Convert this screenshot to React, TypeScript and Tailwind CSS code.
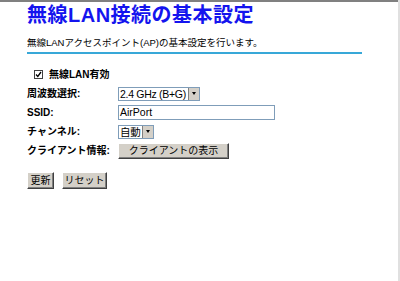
const font = { fontFamily: '"Liberation Sans", "Noto Sans CJK JP", sans-serif' }

function SelectBox({ value }: { value: string }) {
  return (
    <div className="flex h-[14px] items-stretch border border-[#7f9db9] bg-white">
      <span className="whitespace-nowrap pl-[1px] pr-[2px] text-[10.5px] leading-[12px] tracking-[-0.3px] text-black">
        {value}
      </span>
      <span className="flex w-[11px] shrink-0 items-center justify-center border-l border-[#808080] bg-[#d4d0c8]">
        <span className="block h-0 w-0 border-x-[2px] border-t-[3px] border-x-transparent border-t-black" />
      </span>
    </div>
  )
}

function Row({ label, children }: { label: string; children: React.ReactNode }) {
  return (
    <div className="flex h-[19px] items-center">
      <span className="w-[91px] text-[10px] font-bold text-black">{label}</span>
      {children}
    </div>
  )
}

function Win98Button({ label, className }: { label: string; className: string }) {
  return (
    <div
      className={`flex items-center justify-center whitespace-nowrap border border-t-white border-l-white border-r-[#404040] border-b-[#404040] bg-[#d4d0c8] text-[10px] text-black shadow-[inset_-1px_-1px_0_#808080] ${className}`}
    >
      {label}
    </div>
  )
}

export default function App() {
  return (
    <div className="relative h-[281px] w-[400px] overflow-hidden bg-white" style={font}>
      <div className="h-[2px] w-[398px] bg-[#808080]" />
      <div className="absolute right-0 top-0 h-full w-[2px] bg-[#e0e0e0]" />
      <div className="pl-[27px] pt-[1px]">
        <h1 className="text-[20px] font-bold leading-[24px] tracking-[0.5px] text-[#1414ee]">
          無線LAN接続の基本設定
        </h1>
        <p className="mt-[10px] text-[9.5px] leading-[12px] text-black">
          無線LANアクセスポイント(AP)の基本設定を行います。
        </p>
        <div className="mt-[3px] h-[2px] w-[335px] bg-[#38a8d8]" />

        <div className="mt-[13px] flex items-center pl-[7px]">
          <span className="flex h-[9px] w-[9px] items-center justify-center border border-[#404040] bg-white">
            <svg width="7" height="7" viewBox="0 0 7 7">
              <path d="M1 3.5 L2.8 5.5 L6 1" fill="none" stroke="#000" strokeWidth="1.3" />
            </svg>
          </span>
          <span className="ml-[6px] text-[10px] font-bold">無線LAN有効</span>
        </div>

        <div className="mt-[2px] flex flex-col">
          <Row label="周波数選択:">
            <SelectBox value="2.4 GHz (B+G)" />
          </Row>
          <Row label="SSID:">
            <div className="flex h-[15px] w-[157px] items-center border border-[#7f9db9] bg-white pl-[1px] text-[10.5px] text-black">
              AirPort
            </div>
          </Row>
          <Row label="チャンネル:">
            <SelectBox value="自動" />
          </Row>
          <Row label="クライアント情報:">
            <Win98Button label="クライアントの表示" className="h-[16px] w-[111px]" />
          </Row>
        </div>

        <div className="mt-[12px] flex gap-[8px]">
          <Win98Button label="更新" className="h-[17px] w-[27px]" />
          <Win98Button label="リセット" className="h-[17px] w-[45px]" />
        </div>
      </div>
    </div>
  )
}
